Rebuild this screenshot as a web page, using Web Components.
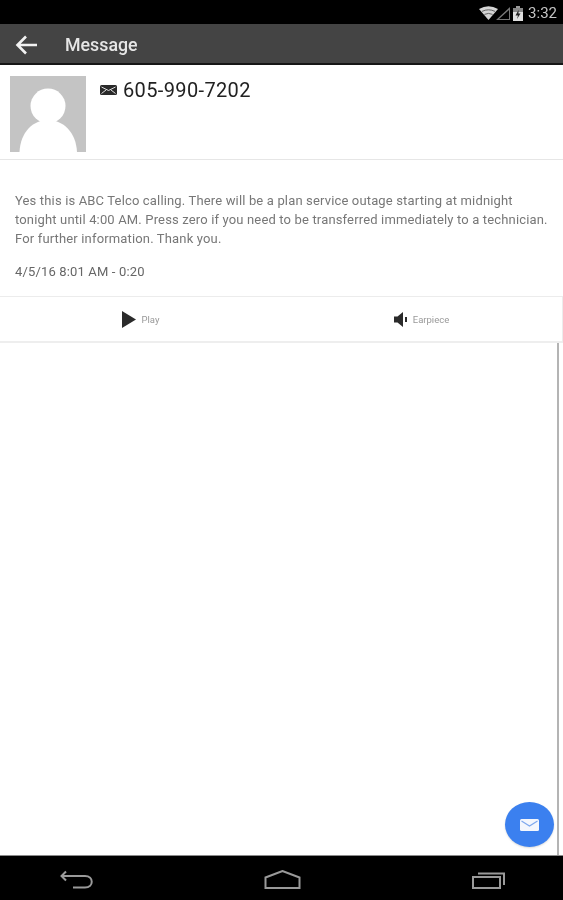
<!DOCTYPE html>
<html>
<head>
<meta charset="utf-8">
<title>Message</title>
<style>
  html, body { margin: 0; padding: 0; height: 100%; background: #fff; }
  body { font-family: Roboto, "Liberation Sans", sans-serif; }
</style>
</head>
<body>
<message-screen></message-screen>

<script>
class StatusBar extends HTMLElement {
  constructor() {
    super();
    this.shadowDOM = this.attachShadow({ mode: 'open' });
    this.shadowDOM.innerHTML = `
    <style>
      :host {
        display: flex;
        align-items: center;
        justify-content: flex-end;
        height: 24px;
        background: #000;
        color: #c4c4c4;
        padding: 1px 6px 0 0;
        box-sizing: border-box;
      }
      svg { display: block; filter: blur(0.4px); }
      span { font-size: 15px; margin-left: 5px; filter: blur(0.4px); }
    </style>
    <svg width="44" height="16" viewBox="0 0 44 16">
      <path d="M0 4 Q9.5 -1.5 19 4 L9.5 15 Z" fill="#d4d4d4"/>
      <path d="M3 6.4 Q9.5 3.2 16 6.4 M5.4 9.4 Q9.5 7.4 13.6 9.4" fill="none" stroke="#555" stroke-width=".9"/>
      <path d="M17 15 L31 2 L31 15 Z M20 14 L30 14 L30 5 Z" fill="#777" fill-rule="evenodd"/>
      <rect x="34" y="3" width="10" height="13" fill="#e0e0e0"/>
      <rect x="34" y="3" width="10" height="4" fill="#888"/>
      <rect x="37" y="1" width="4" height="2" fill="#999"/>
      <path d="M39.5 5 L36.5 10.5 L39 10.5 L38 14 L41.5 8.5 L39.5 8.5 Z" fill="#222"/>
    </svg>
    <span>3:32</span>`;
  }
}

class AppBar extends HTMLElement {
  constructor() {
    super();
    this.shadowDOM = this.attachShadow({ mode: 'open' });
    this.shadowDOM.innerHTML = `
    <style>
      :host {
        display: flex;
        align-items: center;
        height: 41px;
        box-sizing: border-box;
        background: #444;
        border-bottom: 2px solid #161616;
        color: #e6e6e6;
        padding: 2px 0 0 15px;
      }
      svg { display: block; filter: blur(0.3px); }
      h1 { margin: 0 0 0 28px; font-size: 17.8px; font-weight: 500; filter: blur(0.4px); }
    </style>
    <svg width="22" height="20" viewBox="0 0 22 20" fill="none" stroke="#f2f2f2" stroke-width="2.6">
      <path d="M22 10 H3 M11 1.5 L2.5 10 L11 18.5"/>
    </svg>
    <h1><slot></slot></h1>`;
  }
}

class ContactHeader extends HTMLElement {
  constructor() {
    super();
    this.shadowDOM = this.attachShadow({ mode: 'open' });
    this.shadowDOM.innerHTML = `
    <style>
      :host {
        display: flex;
        height: 95px;
        box-sizing: border-box;
        padding: 11px 0 0 10px;
        border-bottom: 1px solid #e6e6e6;
      }
      .avatar { display: block; width: 76px; height: 76px; }
      .row { display: flex; align-items: center; margin-left: 14px; height: 27px; }
      .num { font-size: 20px; color: #222; margin-left: 6px; letter-spacing: .36px; filter: blur(0.4px); }
    </style>
    <svg class="avatar" viewBox="0 0 76 76">
      <rect width="76" height="76" fill="#c4c4c4"/>
      <circle cx="38" cy="30" r="17.5" fill="#fff"/>
      <path d="M9.5 76 C10.5 56 23 44 38 44 C53 44 66 56 67 76 Z" fill="#fff"/>
    </svg>
    <div class="row">
      <svg width="17" height="10" viewBox="0 0 17 10">
        <rect width="17" height="10" rx="1.5" fill="#2a2a2a"/>
        <path d="M1.5 2 L8.5 5.5 L15.5 2 M1.5 8.5 L6 5 M15.5 8.5 L11 5" fill="none" stroke="#ddd" stroke-width="1"/>
      </svg>
      <span class="num"><slot></slot></span>
    </div>`;
  }
}

class MessageBody extends HTMLElement {
  constructor() {
    super();
    this.shadowDOM = this.attachShadow({ mode: 'open' });
    this.shadowDOM.innerHTML = `
    <style>
      :host {
        display: block;
        height: 136px;
        box-sizing: border-box;
        padding: 31px 10px 0 15px;
        color: #777;
        font-size: 13px;
        line-height: 19px;
        letter-spacing: .155px;
      }
      .meta { margin-top: 14px; color: #666; }
      p { margin: 0; filter: blur(0.4px); }
    </style>
    <p><slot></slot></p>
    <p class="meta"><slot name="meta"></slot></p>`;
  }
}

class ActionButton extends HTMLElement {
  constructor() {
    super();
    this.shadowDOM = this.attachShadow({ mode: 'open' });
    this.shadowDOM.innerHTML = `
    <style>
      :host {
        flex: 1;
        display: flex;
        align-items: center;
        justify-content: center;
        gap: 5px;
        color: #999;
        font-size: 9.5px;
        filter: blur(0.4px);
      }
    </style>
    <slot name="icon"></slot>
    <slot></slot>`;
  }
}

class ActionBar extends HTMLElement {
  constructor() {
    super();
    this.shadowDOM = this.attachShadow({ mode: 'open' });
    this.shadowDOM.innerHTML = `
    <style>
      :host {
        display: flex;
        height: 47px;
        box-sizing: border-box;
        border-top: 1px solid #ececec;
        border-bottom: 2px solid #eeeeee;
        border-right: 1px solid #ececec;
      }
    </style>
    <slot></slot>`;
  }
}

class NavBar extends HTMLElement {
  constructor() {
    super();
    this.shadowDOM = this.attachShadow({ mode: 'open' });
    this.shadowDOM.innerHTML = `
    <style>
      :host {
        display: flex;
        justify-content: space-between;
        align-items: center;
        height: 45px;
        box-sizing: border-box;
        background: #000;
        border-top: 1px solid #8a8a8a;
        padding: 4px 58px 0 60px;
      }
      svg { display: block; fill: none; stroke: #9a9a9a; stroke-width: 2; filter: blur(0.4px); }
    </style>
    <svg width="33" height="20" viewBox="0 0 33 20">
      <path d="M6 1.5 L1.5 6 L6 10.5 M2 6 H25 C34 6 34 17.5 25 17.5 H13"/>
    </svg>
    <svg width="37" height="20" viewBox="0 0 37 20">
      <path d="M1.5 7.5 L18.5 1 L35.5 7.5 V18 H1.5 Z"/>
    </svg>
    <svg width="33" height="20" viewBox="0 0 33 20">
      <rect x="1" y="7" width="27" height="11"/>
      <path d="M6 3.5 H32 V15"/>
    </svg>`;
  }
}

class ComposeFab extends HTMLElement {
  constructor() {
    super();
    this.shadowDOM = this.attachShadow({ mode: 'open' });
    this.shadowDOM.innerHTML = `
    <style>
      :host {
        position: absolute;
        right: 3px;
        bottom: 8px;
        width: 49px;
        height: 45px;
        border-radius: 50%;
        background: #3b80ef;
        display: flex;
        align-items: center;
        justify-content: center;
        box-shadow: 0 1px 2px rgba(0,0,0,.15);
      }
      svg { display: block; filter: blur(0.4px); }
    </style>
    <svg width="19" height="12" viewBox="0 0 19 12">
      <rect width="19" height="12" rx="1.5" fill="#f4f7fd"/>
      <path d="M1.5 2 L9.5 7 L17.5 2" fill="none" stroke="#7ea8ee" stroke-width="1.2"/>
    </svg>`;
  }
}

class MessageScreen extends HTMLElement {
  constructor() {
    super();
    this.shadowDOM = this.attachShadow({ mode: 'open' });
    this.shadowDOM.innerHTML = `
    <style>
      :host {
        display: flex;
        flex-direction: column;
        width: 563px;
        height: 900px;
        background: #fff;
        overflow: hidden;
      }
      .rest {
        flex: 1;
        position: relative;
        box-sizing: border-box;
        width: 559px;
        border-right: 2px solid #b4b4b4;
      }
      svg { display: block; }
    </style>
    <status-bar></status-bar>
    <app-bar>Message</app-bar>
    <contact-header>605-990-7202</contact-header>
    <message-body>
      Yes this is ABC Telco calling. There will be a plan service outage starting at midnight tonight until 4:00 AM. Press zero if you need to be transferred immediately to a technician. For further information. Thank you.
      <span slot="meta">4/5/16 8:01 AM - 0:20</span>
    </message-body>
    <action-bar>
      <action-button>
        <svg slot="icon" width="15" height="17" viewBox="0 0 15 17"><path d="M0 0 L14 8.5 L0 17 Z" fill="#2b2b2b"/></svg>
        Play
      </action-button>
      <action-button>
        <svg slot="icon" width="14" height="15" viewBox="0 0 14 15"><path d="M0 4.5 H3.5 L9 0 V15 L3.5 10.5 H0 Z" fill="#2b2b2b"/><rect x="11" y="5" width="2" height="5" fill="#2b2b2b"/></svg>
        Earpiece
      </action-button>
    </action-bar>
    <div class="rest"><compose-fab></compose-fab></div>
    <nav-bar></nav-bar>`;
  }
}

customElements.define('status-bar', StatusBar);
customElements.define('app-bar', AppBar);
customElements.define('contact-header', ContactHeader);
customElements.define('message-body', MessageBody);
customElements.define('action-button', ActionButton);
customElements.define('action-bar', ActionBar);
customElements.define('nav-bar', NavBar);
customElements.define('compose-fab', ComposeFab);
customElements.define('message-screen', MessageScreen);
</script>
</body>
</html>
